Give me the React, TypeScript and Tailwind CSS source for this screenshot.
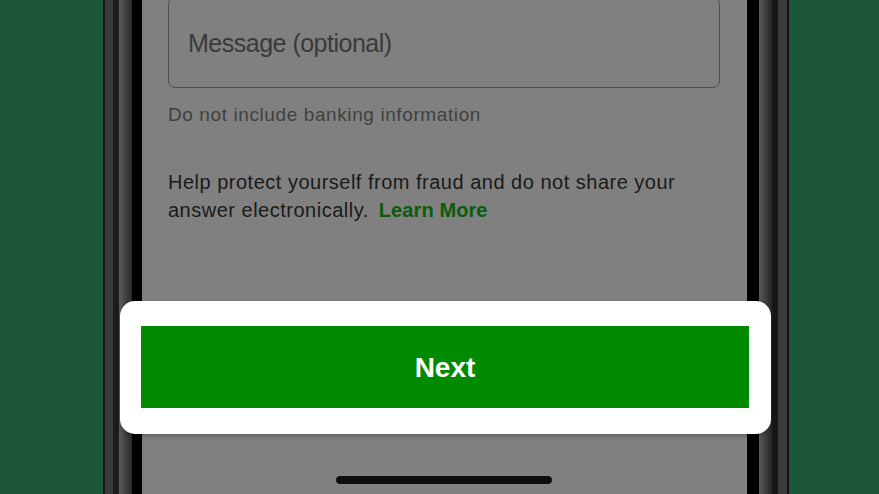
import React from "react";

export default function App() {
  const font = { fontFamily: '"Liberation Sans", Arial, sans-serif' };
  return (
    <div className="relative flex h-[494px] w-[879px] overflow-hidden bg-[#1c5539] pl-[103px]" style={font}>
      {/* left frame */}
      <div className="flex h-full shrink-0">
        <div className="w-[2px] bg-[#141414]" />
        <div className="w-[8px] bg-[#3a3a3a]" />
        <div className="w-[6px] bg-[#1c1c1c]" />
        <div className="w-[13px] bg-gradient-to-r from-[#5c5c5c] to-[#2a2a2a]" />
        <div className="w-[10px] bg-black" />
      </div>
      {/* screen */}
      <div className="flex h-full w-[605px] shrink-0 flex-col bg-[#808080] pl-[26px] pr-[27px]">
        <div className="mt-[-3px] flex h-[91px] items-center rounded-[7px] border-[1.5px] border-[#4e4e4e] pl-[19px] pt-[2px]">
          <span className="text-[25px] tracking-[-0.5px] text-[#3a3a3a]">Message (optional)</span>
        </div>
        <div className="mt-[14px] text-[19px] leading-[26px] tracking-[0.6px] text-[#404040]">
          Do not include banking information
        </div>
        <div className="mt-[40px] text-[20px] leading-[28px] tracking-[0.5px] text-[#1a1a1a]">
          Help protect yourself from fraud and do not share your answer electronically.{" "}
          <span className="ml-[4px] font-bold tracking-[0.1px] text-[#0b5c0b]">Learn More</span>
        </div>
        <div className="mt-auto mb-[10px] flex justify-center">
          <div className="h-[8px] w-[216px] rounded-full bg-[#0e0e0e]" />
        </div>
      </div>
      {/* right frame */}
      <div className="flex h-full shrink-0">
        <div className="w-[12px] bg-black" />
        <div className="w-[13px] bg-gradient-to-r from-[#595959] to-[#262626]" />
        <div className="w-[6px] bg-[#161616]" />
        <div className="w-[9px] bg-[#3b3b3b]" />
        <div className="w-[2px] bg-[#111]" />
      </div>
      {/* highlighted card */}
      <div className="absolute left-[120px] top-[301px] flex h-[133px] w-[651px] rounded-[15px] bg-white pb-[26px] pl-[21px] pr-[22px] pt-[25px] shadow-[0_2px_4px_rgba(0,0,0,0.25)]">
        <div className="flex flex-1 items-center justify-center bg-[#008a00] pt-[2px]">
          <span className="text-[28px] font-bold text-white">Next</span>
        </div>
      </div>
    </div>
  );
}
